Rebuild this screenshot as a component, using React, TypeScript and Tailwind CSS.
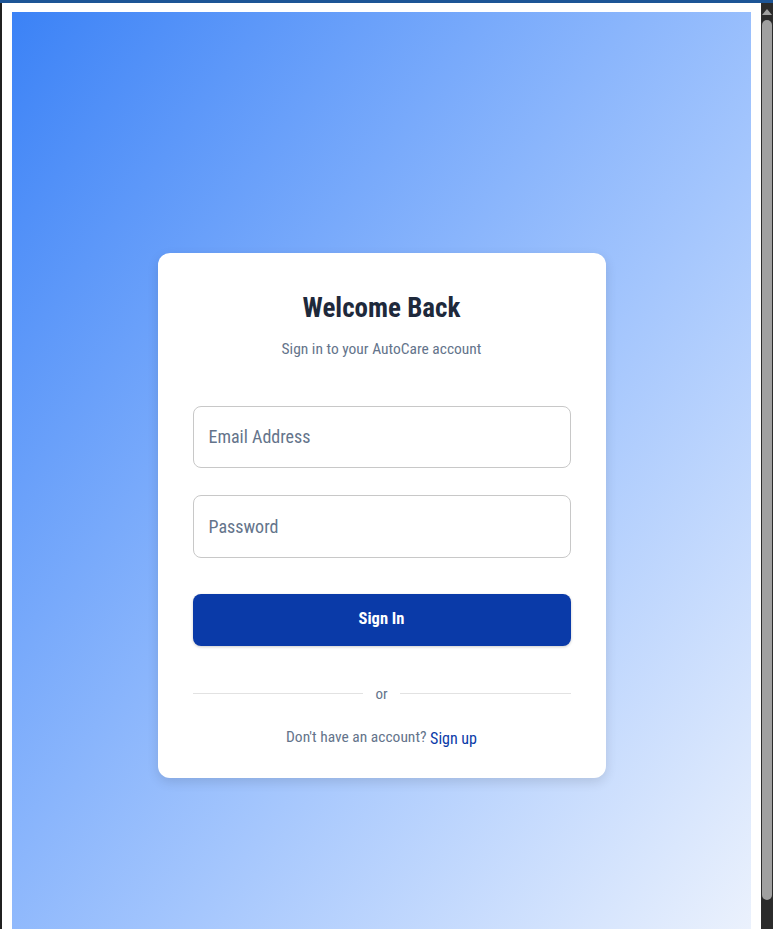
import React from "react";

export default function App() {
  return (
    <div className="w-[773px] h-[929px] overflow-hidden bg-[#202020] flex flex-col" style={{ fontFamily: "Roboto, 'Liberation Sans', sans-serif" }}>
      <div className="h-[3px] w-full bg-[#1d5596] shrink-0" />
      <div className="flex flex-1 min-h-0">
        <div className="w-[2px] bg-[#202020] shrink-0" />
        <div className="flex-1 bg-white pt-[9px] pl-[10px] pr-[10px] overflow-hidden">
          <div className="h-[1006px] bg-gradient-to-br from-[#3b82f6] to-[#f3f6fc] flex items-center justify-center">
            <div className="w-[448px] bg-white rounded-[12px] shadow-[0_4px_12px_rgba(0,0,0,0.12)] px-[35px] pt-[39px] pb-[31px] flex flex-col font-stretch-condensed">
              <h1 className="text-center text-[27px] font-bold text-[#1e293b] leading-[32px]">Welcome Back</h1>
              <p className="text-center text-[15.5px] text-[#64748b] mt-[15px] leading-[20px]">Sign in to your AutoCare account</p>
              <div className="mt-[47px] h-[62px] border border-[#c8c8c8] rounded-[8px] flex items-center px-[15px] text-[18px] text-[#64748b]">Email Address</div>
              <div className="mt-[27px] h-[63px] border border-[#c8c8c8] rounded-[8px] flex items-center px-[15px] text-[18px] text-[#64748b]">Password</div>
              <div className="mt-[36px] h-[52px] bg-[#0a3aa8] rounded-[8px] flex items-center justify-center text-white text-[16.5px] font-bold shadow-[0_1px_3px_rgba(0,0,0,0.2)]">Sign In</div>
              <div className="mt-[38px] flex items-center gap-[12px]">
                <div className="flex-1 h-px bg-[#e2e2e2]" />
                <span className="text-[15px] text-[#64748b] leading-[20px]">or</span>
                <div className="flex-1 h-px bg-[#e2e2e2]" />
              </div>
              <div className="mt-[23px] text-center text-[15.5px] text-[#64748b] leading-[20px]">
                Don't have an account? <span className="text-[16px] text-[#0a3aa8] relative top-[2px]">Sign up</span>
              </div>
            </div>
          </div>
        </div>
        <div className="w-[12px] bg-[#2b2b2b] shrink-0 flex flex-col items-center">
          <div className="mt-[6px] w-0 h-0 border-l-[5px] border-r-[5px] border-b-[6px] border-l-transparent border-r-transparent border-b-[#a0a0a0]" />
          <div className="mt-[5px] w-[10px] h-[880px] rounded-[5px] bg-[#a0a0a0]" />
        </div>
      </div>
    </div>
  );
}
